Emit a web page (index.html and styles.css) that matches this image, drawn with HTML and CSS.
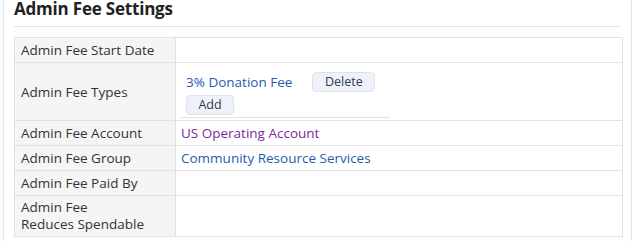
FILE: index.html
```html
<!DOCTYPE html>
<html>
<head>
<meta charset="utf-8">
<link rel="stylesheet" href="styles.css">
</head>
<body>
<div class="frame">
  <h2 class="title">Admin Fee Settings</h2>
  <div class="rule"></div>
  <table class="grid">
    <tr class="r1"><th>Admin Fee Start Date</th><td></td></tr>
    <tr class="r2"><th>Admin Fee Types</th><td>
      <div class="types">
        <div class="type-row"><a class="link" href="#">3% Donation Fee</a><button class="btn btn-del">Delete</button></div>
        <div class="type-row"><button class="btn btn-add">Add</button></div>
      </div>
    </td></tr>
    <tr class="r1"><th>Admin Fee Account</th><td><a class="link visited" href="#">US Operating Account</a></td></tr>
    <tr class="r1"><th>Admin Fee Group</th><td><a class="link" href="#">Community Resource Services</a></td></tr>
    <tr class="r1"><th>Admin Fee Paid By</th><td></td></tr>
    <tr class="r3"><th>Admin Fee<br>Reduces Spendable</th><td></td></tr>
  </table>
</div>
</body>
</html>
```
FILE: styles.css
```css
html, body { margin: 0; padding: 0; background: #fff; }
body { font-family: "Open Sans", "Noto Sans", sans-serif; color: #333; }
.frame {
  margin-left: 3px;
  width: 629px;
  height: 241px;
  border-left: 1px solid #e6e6ea;
  border-right: 1px solid #e6e6ea;
  padding: 0 10px 0 10px;
  box-sizing: border-box;
  overflow: hidden;
}
.title {
  margin: -2px 0 0 0;
  font-size: 17px;
  font-weight: 700;
  color: #222;
  line-height: 22px;
  letter-spacing: -0.2px;
}
.rule { height: 0; border-top: 1px solid #e3e3e8; margin-top: 6px; margin-bottom: 10px; }
.grid {
  width: 609px;
  border-collapse: collapse;
  font-size: 13.5px;
}
.grid th, .grid td {
  border: 1px solid #e2e2e2;
  padding: 0 6px;
  text-align: left;
  vertical-align: middle;
}
.grid th {
  width: 148px;
  font-weight: 400;
  background: #f5f5f5;
  color: #333;
  line-height: 16px;
}
.r1 { height: 25px; }
.r2 { height: 58px; }
.r3 { height: 41px; }
.r3 th { line-height: 17px; }
.grid td { padding: 0 5px; }
.types {
  width: 209px;
  border-bottom: 1px solid #e2e2e2;
  padding: 5px 0 1px 5px;
  box-sizing: border-box;
  margin-top: 1px;
}
.type-row { display: flex; align-items: center; gap: 20px; height: 22px; }
.type-row + .type-row { margin-top: 1px; }
.link { color: #1f5cac; text-decoration: none; }
.visited { color: #7a2aa0; }
.btn {
  font-family: inherit;
  font-size: 12.5px;
  color: #2f3b52;
  background: #eef2f8;
  border: 1px solid #dde3ec;
  border-radius: 4px;
  height: 20px;
  padding: 0;
  line-height: 18px;
}
.btn-add { width: 48px; }
.btn-del { width: 63px; }
```
